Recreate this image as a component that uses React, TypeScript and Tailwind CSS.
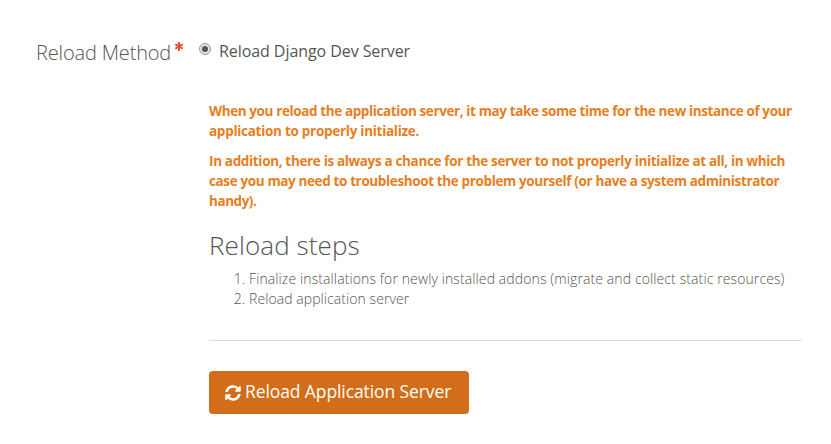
import { FaSyncAlt } from 'react-icons/fa';

const warnings = [
  [
    { text: 'When you reload the application server, it may take some time for the new instance of your', tracking: 'tracking-[-0.39px]' },
    { text: 'application to properly initialize.', tracking: 'tracking-[-0.28px]' },
  ],
  [
    { text: 'In addition, there is always a chance for the server to not properly initialize at all, in which', tracking: 'tracking-[-0.34px]' },
    { text: 'case you may need to troubleshoot the problem yourself (or have a system administrator', tracking: 'tracking-[-0.37px]' },
    { text: 'handy).', tracking: 'tracking-[-0.45px]' },
  ],
];

export default function App() {
  return (
    <main className="flex h-[444px] w-[831px] bg-white pr-[29px] pl-9 font-['Open_Sans','Noto_Sans',sans-serif] text-[#555]">
      <div className="flex w-[163px] shrink-0 items-start pt-[38px]">
        <label htmlFor="reload-method" className="text-xl leading-[30px] font-light tracking-[-0.16px] whitespace-nowrap">
          Reload Method
        </label>
        <svg className="mt-[4px] ml-[4px] h-[9px] w-[8px] shrink-0" viewBox="0 0 8 9" stroke="#ed4b3c" strokeWidth="2" aria-hidden="true">
          <path d="M4 0v9M.3 2.3l7.4 4.4M7.7 2.3L.3 6.7" />
        </svg>
      </div>

      <div className="min-w-0 flex-1">
        <div className="flex h-[101px] items-start pt-[38px]">
          <span
            id="reload-method"
            role="radio"
            aria-checked="true"
            aria-label="Reload Django Dev Server"
            className="mt-[5px] flex size-3 shrink-0 items-center justify-center rounded-full border border-[#999] bg-[#e4e4e4]"
          >
            <span className="size-1.5 rounded-full bg-[#555]" />
          </span>
          <span className="ml-2 text-base leading-[26px] tracking-[-0.07px] whitespace-nowrap">Reload Django Dev Server</span>
        </div>

        <div className="pl-[10px]">
          <div className="flex flex-col gap-[10px] text-[13.5px] leading-5 font-bold text-[#e67e22]">
            {warnings.map((lines, index) => (
              <p key={index}>
                {lines.map(({ text, tracking }) => (
                  <span key={text} className={`block whitespace-nowrap ${tracking}`}>{text}</span>
                ))}
              </p>
            ))}
          </div>

          <h3 className="mt-5 text-[26px] leading-[29px] font-light tracking-[0.1px]">Reload steps</h3>

          <ol className="mt-[9px] list-decimal pl-10 text-sm leading-5 font-light whitespace-nowrap">
            <li className="tracking-[0.11px]">Finalize installations for newly installed addons (migrate and collect static resources)</li>
            <li className="tracking-[0.07px]">Reload application server</li>
          </ol>

          <hr className="mt-[31px] border-t border-[#ddd]" />

          <button className="mt-[30px] flex h-[43px] w-[260px] items-center rounded-[4px] bg-[#d26e19] pl-4 text-[17.5px] font-normal whitespace-nowrap text-white">
            <FaSyncAlt className="size-4 shrink-0" />
            <span className="mb-[2px] ml-[4px] leading-none tracking-[-0.1px]">Reload Application Server</span>
          </button>
        </div>
      </div>
    </main>
  );
}
